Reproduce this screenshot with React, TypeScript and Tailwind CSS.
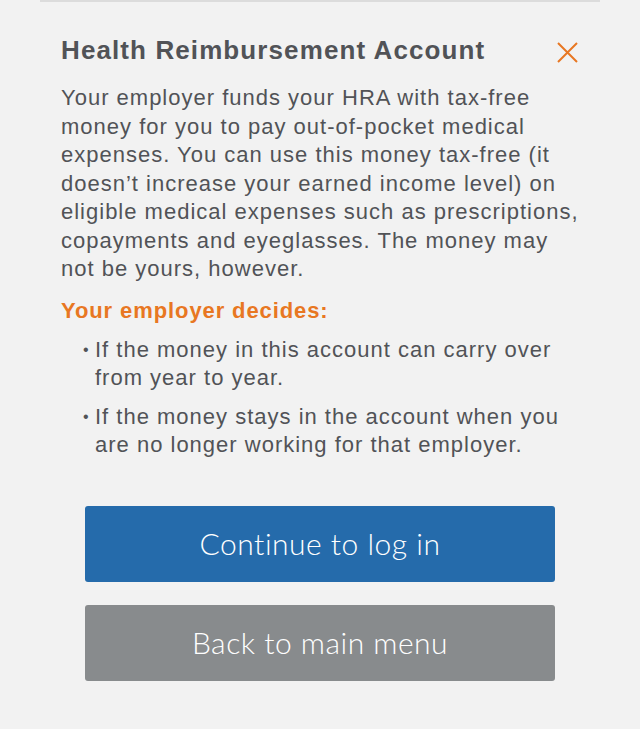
export default function App() {
  return (
    <div className="min-h-[729px] w-full bg-[#f2f2f2]" style={{ fontFamily: '"Liberation Sans", Arial, sans-serif' }}>
      <div className="mx-[40px] border-t-2 border-[#dcdcdc] pt-[32px]">
        <div className="flex items-start justify-between pl-[21px] pr-[21px]">
          <h2 className="text-[26px] font-bold leading-[32px] tracking-[1.1px] text-[#515357]">Health Reimbursement Account</h2>
          <button aria-label="Close" className="mt-[8px] mr-[1px]">
            <svg width="21" height="21" viewBox="0 0 21 21" fill="none">
              <path d="M1 1L20 20M20 1L1 20" stroke="#e87722" strokeWidth="2" />
            </svg>
          </button>
        </div>
        <p className="mt-[18px] pl-[21px] pr-[18px] text-[22px] leading-[28.5px] tracking-[1px] text-[#515357]">
          Your employer funds your HRA with tax-free money for you to pay out-of-pocket medical expenses. You can use this money tax-free (it doesn’t increase your earned income level) on eligible medical expenses such as prescriptions, copayments and eyeglasses. The money may not be yours, however.
        </p>
        <h3 className="mt-[13px] pl-[21px] text-[22px] font-bold leading-[28px] tracking-[0.9px] text-[#e87722]">Your employer decides:</h3>
        <ul className="mt-[11px] pl-[43px] pr-[28px] text-[22px] leading-[28.5px] tracking-[1px] text-[#515357]">
          <li className="flex">
            <span className="w-[12px] shrink-0 text-[16px]">•</span>
            <span>If the money in this account can carry over from year to year.</span>
          </li>
          <li className="mt-[10px] flex">
            <span className="w-[12px] shrink-0 text-[16px]">•</span>
            <span>If the money stays in the account when you are no longer working for that employer.</span>
          </li>
        </ul>
        <div className="mt-[46px] flex flex-col gap-[23px] px-[45px]" style={{ fontFamily: 'Lato, "Noto Sans", sans-serif' }}>
          <button className="h-[76px] w-full rounded-[3px] bg-[#256bab] text-[30px] font-light tracking-[0.5px] text-white">
            Continue to log in
          </button>
          <button className="h-[76px] w-full rounded-[3px] bg-[#888b8d] text-[30px] font-light tracking-[0.5px] text-white">
            Back to main menu
          </button>
        </div>
      </div>
    </div>
  )
}
